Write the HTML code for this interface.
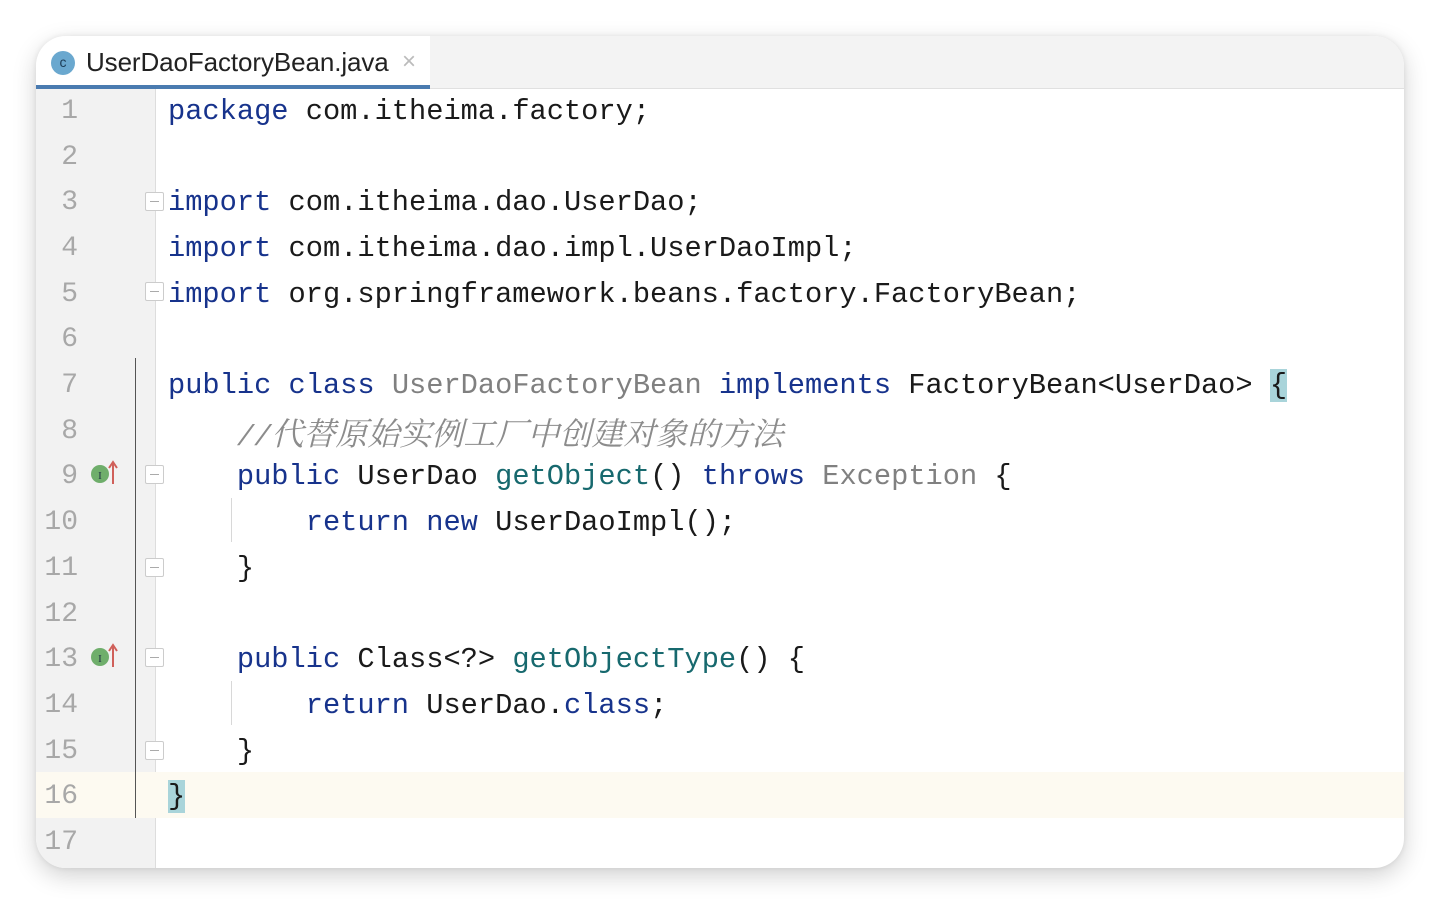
<!DOCTYPE html>
<html><head><meta charset="utf-8"><style>
html,body{margin:0;padding:0;background:#fff;width:1440px;height:904px;overflow:hidden}
.win{position:absolute;left:36px;top:36px;width:1368px;height:832px;border-radius:30px;background:#fff;overflow:hidden;box-shadow:0 8px 24px rgba(0,0,0,.18),0 0 6px rgba(0,0,0,.08)}
.tabbar{position:absolute;left:0;top:0;width:1368px;height:52px;background:#f3f3f3;border-bottom:1px solid #e0e0e0}
.tab{position:absolute;left:0;top:0;width:394px;height:52px;background:#fff}
.tab .ul{position:absolute;left:0;bottom:-1px;width:394px;height:4px;background:#4a7bb0}
.tab .ic{position:absolute;left:15px;top:15px;width:24px;height:24px;border-radius:50%;background:#6aa8cf;color:#1d3d57;font:14px "Liberation Sans",sans-serif;text-align:center;line-height:23px}
.tab .t{position:absolute;left:50px;top:11px;font:26px "Liberation Sans",sans-serif;color:#222;letter-spacing:-0.1px}
.tab .x{position:absolute;left:366px;top:12px;font:24px "Liberation Sans",sans-serif;color:#bbb}
.gut{position:absolute;left:0;top:53px;width:119px;height:779px;background:#f2f2f2;border-right:1px solid #ddd}
.hl{position:absolute;left:0;top:736px;width:1368px;height:46px;background:#fdfaf1}
.ln{position:absolute;left:0;width:42px;text-align:right;font:28px "Liberation Mono",monospace;color:#a8a8a8;line-height:46px}
.code{position:absolute;left:132px;font:28.7px "Liberation Mono",monospace;color:#1a1a1a;line-height:46px;white-space:pre}
.k{color:#17338c}.g{color:#808080}.m{color:#17696e}
.cm{color:#8c8c8c;font-style:italic}
.cj{font-family:"Noto Serif CJK SC","Noto Sans CJK SC",serif;font-size:32px;letter-spacing:0;font-style:italic}
.br{background:#a9d4da}
.vl{position:absolute;width:1px;background:#d8d8d8}
.fold{position:absolute;left:109px;width:17px;height:17px;border:1px solid #ccc;background:#fff;border-radius:2px}
.fold:after{content:"";position:absolute;left:4px;top:8px;width:9px;height:1px;background:#aaa}
.c{position:absolute;left:0;top:3px;width:1368px;height:832px}
</style></head><body>
<div class="win">
<div class="tabbar"><div class="tab"><div class="ic">c</div><div class="t">UserDaoFactoryBean.java</div><div class="x">×</div><div class="ul"></div></div></div>
<div class="gut"></div>
<div class="hl"></div>
<div class="vl" style="left:99px;top:322px;height:460px;background:#555"></div>
<div class="vl" style="left:195px;top:462px;height:44px"></div>
<div class="vl" style="left:195px;top:645px;height:44px"></div>
<div class="fold" style="top:156px"></div>
<div class="fold" style="top:246px"></div>
<div class="fold" style="top:429px"></div>
<div class="fold" style="top:522px"></div>
<div class="fold" style="top:612px"></div>
<div class="fold" style="top:705px"></div>
<svg style="position:absolute;left:52px;top:424px" width="32" height="28"><circle cx="12" cy="14" r="9" fill="#6fae6b"/><text x="12" y="19" font-size="11" font-family="Liberation Serif" text-anchor="middle" fill="#234">I</text><path d="M25 24V3M21 8l4-6 4 6" stroke="#d0605a" stroke-width="2" fill="none"/></svg>
<svg style="position:absolute;left:52px;top:607px" width="32" height="28"><circle cx="12" cy="14" r="9" fill="#6fae6b"/><text x="12" y="19" font-size="11" font-family="Liberation Serif" text-anchor="middle" fill="#234">I</text><path d="M25 24V3M21 8l4-6 4 6" stroke="#d0605a" stroke-width="2" fill="none"/></svg>
<div class="c">
<div class="ln" style="top:50px">1</div>
<div class="ln" style="top:96px">2</div>
<div class="ln" style="top:141px">3</div>
<div class="ln" style="top:187px">4</div>
<div class="ln" style="top:233px">5</div>
<div class="ln" style="top:278px">6</div>
<div class="ln" style="top:324px">7</div>
<div class="ln" style="top:370px">8</div>
<div class="ln" style="top:415px">9</div>
<div class="ln" style="top:461px">10</div>
<div class="ln" style="top:507px">11</div>
<div class="ln" style="top:553px">12</div>
<div class="ln" style="top:598px">13</div>
<div class="ln" style="top:644px">14</div>
<div class="ln" style="top:690px">15</div>
<div class="ln" style="top:735px">16</div>
<div class="ln" style="top:781px">17</div>
<div class="code" style="top:50px"><span class="k">package</span> com.itheima.factory;</div>
<div class="code" style="top:141px"><span class="k">import</span> com.itheima.dao.UserDao;</div>
<div class="code" style="top:187px"><span class="k">import</span> com.itheima.dao.impl.UserDaoImpl;</div>
<div class="code" style="top:233px"><span class="k">import</span> org.springframework.beans.factory.FactoryBean;</div>
<div class="code" style="top:324px"><span class="k">public class</span> <span class="g">UserDaoFactoryBean</span> <span class="k">implements</span> FactoryBean&lt;UserDao&gt; <span class="br">{</span></div>
<div class="code" style="top:370px">    <span class="cm">//<span class="cj">代替原始实例工厂中创建对象的方法</span></span></div>
<div class="code" style="top:415px">    <span class="k">public</span> UserDao <span class="m">getObject</span>() <span class="k">throws</span> <span class="g">Exception</span> {</div>
<div class="code" style="top:461px">        <span class="k">return new</span> UserDaoImpl();</div>
<div class="code" style="top:507px">    }</div>
<div class="code" style="top:598px">    <span class="k">public</span> Class&lt;?&gt; <span class="m">getObjectType</span>() {</div>
<div class="code" style="top:644px">        <span class="k">return</span> UserDao.<span class="k">class</span>;</div>
<div class="code" style="top:690px">    }</div>
<div class="code" style="top:735px"><span class="br">}</span></div>
</div>
</div>
</body></html>
